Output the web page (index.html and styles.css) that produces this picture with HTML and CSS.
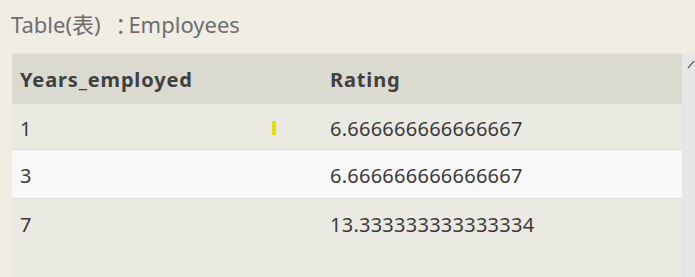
FILE: index.html
```html
<!DOCTYPE html>
<html>
<head>
<meta charset="utf-8">
<link rel="stylesheet" href="styles.css">
</head>
<body>
<div class="title">Table(表) <span class="colon">：</span>Employees</div>
<div class="panel">
  <div class="grid">
    <div class="row head">
      <div class="cell">Years_employed</div>
      <div class="cell">Rating</div>
    </div>
    <div class="row r1">
      <div class="cell c1">1<span class="marker"></span></div>
      <div class="cell">6.666666666666667</div>
    </div>
    <div class="row r2">
      <div class="cell">3</div>
      <div class="cell">6.666666666666667</div>
    </div>
    <div class="row r3">
      <div class="cell">7</div>
      <div class="cell">13.333333333333334</div>
    </div>
  </div>
  <div class="scroll"><svg width="13" height="18" viewBox="0 0 13 18"><path d="M6 15 L12 8" stroke="#666" stroke-width="1.3" fill="none"/></svg></div>
</div>
</body>
</html>
```
FILE: styles.css
```css
html, body {
  margin: 0;
  padding: 0;
  background: #f0ede5;
  font-family: "Noto Sans", "Noto Sans CJK SC", sans-serif;
  overflow: hidden;
}
.title {
  height: 53px;
  padding-left: 11px;
  box-sizing: border-box;
  padding-top: 9px;
  font-size: 22px;
  line-height: 30px;
  color: #6e6e6e;
}
.colon {
  margin-left: 9px;
  letter-spacing: -9px;
}
.panel {
  display: flex;
  margin-left: 12px;
  height: 224px;
}
.grid {
  width: 670px;
  border-top: 1px solid #e6e6e0;
  display: flex;
  flex-direction: column;
}
.row {
  display: grid;
  grid-template-columns: 310px 1fr;
  align-items: center;
  box-sizing: border-box;
  border-bottom: 1px solid #dcdcd8;
  font-size: 20px;
  letter-spacing: 0.25px;
  color: #3b3b3b;
}
.cell {
  padding-left: 8px;
}
.head {
  height: 50px;
  padding-top: 2px;
  background: #dadad0;
  font-weight: bold;
  letter-spacing: 0.85px;
  color: #404040;
}
.r1 { height: 46px; padding-top: 4px; background: #eaeae3; }
.r2 { height: 49px; padding-top: 3px; background: #f8f8f8; }
.r3 {
  flex: 1;
  align-items: start;
  border-bottom: none;
  padding-top: 12px;
  background: #eaeae3;
}
.c1 { position: relative; }
.marker {
  position: absolute;
  left: 260px;
  top: 6px;
  width: 4px;
  height: 14px;
  background: #e6e000;
}
.scroll {
  width: 13px;
  background: #e7e7e7;
}
.scroll svg { display: block; }
```
